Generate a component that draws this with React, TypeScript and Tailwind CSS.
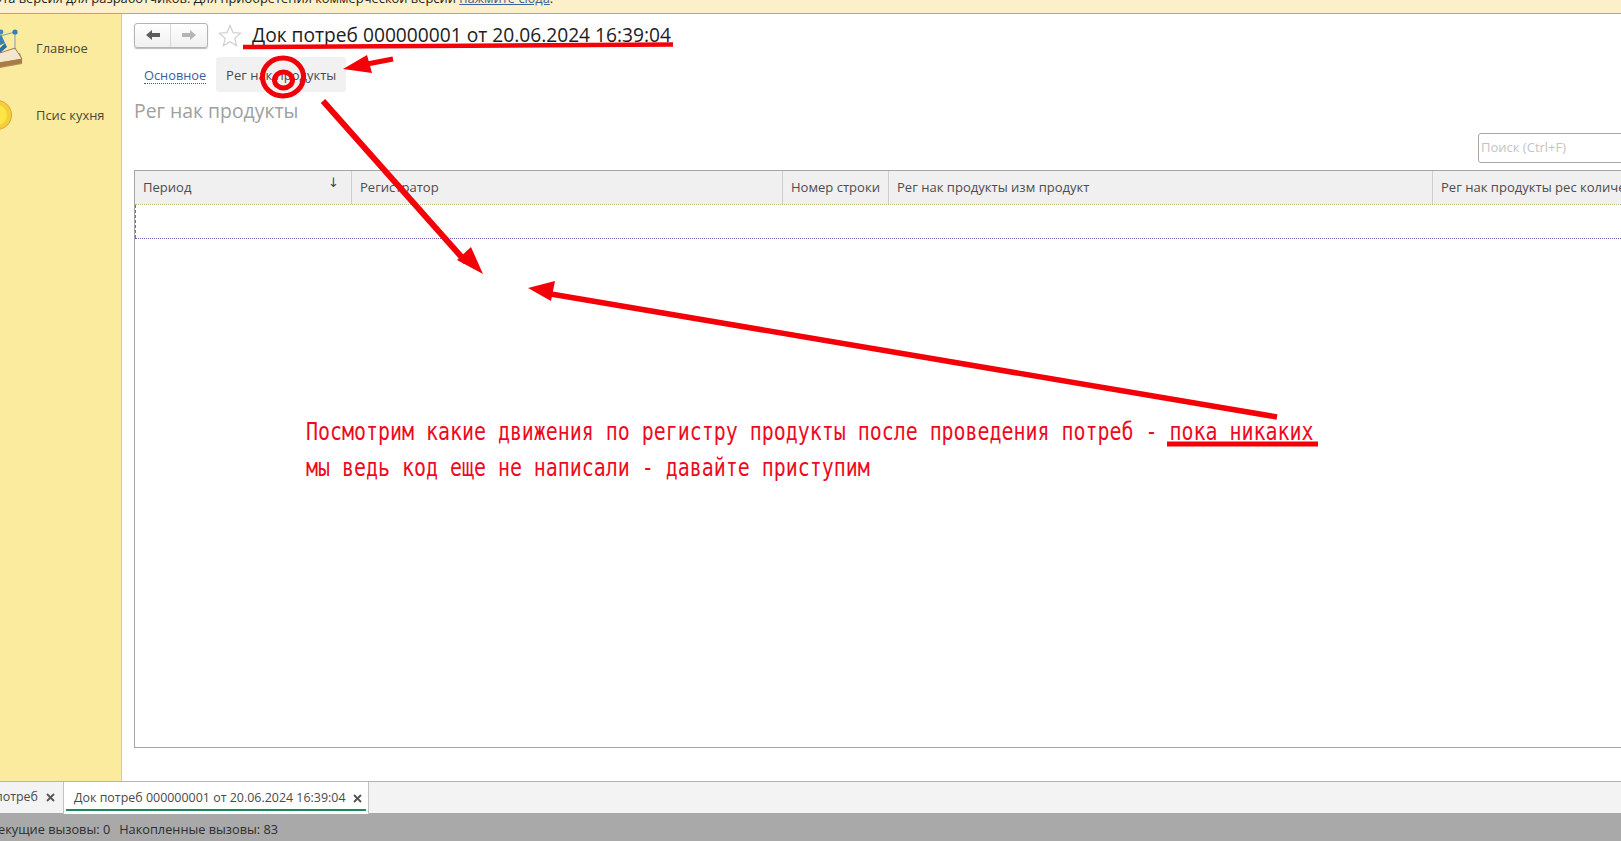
import React from "react";

const ui = "font-['Open_Sans',sans-serif]";

function HouseIcon() {
  return (
    <svg width="24" height="40" viewBox="0 0 24 40" className="shrink-0 mb-[1px]">
      <path d="M-6 31 L20 25 L22 31 L22 36 L-6 41 Z" fill="#b98e57" />
      <path d="M-6 27 L15 20 L22 31 L-6 36 Z" fill="#f3e7cd" stroke="#a57f4c" strokeWidth="1" />
      <path d="M-6 35 L22 31 L22 35 L-6 40 Z" fill="#a97b45" />
      <path d="M0 8 L15 4 L15 22" fill="none" stroke="#7f9db5" strokeWidth="1" />
      <path d="M-4 19 L1 6 L5 15 Z" fill="#3a80b8" />
      <path d="M-4 24 L5 15 L7 19 L0 25 Z" fill="#2a6fa8" />
      <circle cx="1" cy="4" r="2.4" fill="#3a8ac4" />
      <circle cx="15" cy="4" r="2.6" fill="#2f7fb8" />
    </svg>
  );
}

function CoinIcon() {
  return (
    <svg width="13" height="32" viewBox="0 0 13 32" className="shrink-0">
      <circle cx="-3" cy="16" r="15" fill="#d9ab2e" />
      <circle cx="-3" cy="16" r="14" fill="#f4cf3a" />
      <circle cx="-3" cy="16" r="10" fill="#fde545" />
    </svg>
  );
}

function Cross() {
  return (
    <svg width="9" height="9" viewBox="0 0 9 9" className="shrink-0">
      <path d="M1 1 L8 8 M8 1 L1 8" stroke="#555" strokeWidth="1.8" fill="none" />
    </svg>
  );
}

function NavItem({ icon, label, className }: { icon: React.ReactNode; label: string; className: string }) {
  return (
    <div className={`flex h-[40px] items-center ${className}`}>
      <div className="flex w-[36px] items-center">{icon}</div>
      <span className="pt-[2px] text-[12.9px] text-[#4a4a3a]">{label}</span>
    </div>
  );
}

function HeaderCell({ label, className, sort }: { label: string; className: string; sort?: boolean }) {
  return (
    <div className={`relative flex h-full shrink-0 items-center border-r border-[#cfcfcf] pl-[8px] text-[13.05px] whitespace-nowrap text-[#4d4d4d] ${className}`}>
      {label}
      {sort && <span className="absolute top-[2px] right-[12px] font-['DejaVu_Sans',sans-serif] text-[13px] text-[#444]">↓</span>}
    </div>
  );
}

function Annotations() {
  return (
    <svg className="pointer-events-none absolute top-0 left-0" width="1621" height="841" viewBox="0 0 1621 841">
      <path d="M243 47 L673 44.5" stroke="#f40008" strokeWidth="4.5" fill="none" />
      <path d="M393 59 L362 65" stroke="#f40008" strokeWidth="5" fill="none" />
      <path d="M343 69 L367 55 L372 73 Z" fill="#f40008" />
      <ellipse cx="283" cy="77" rx="20.5" ry="19" stroke="#f00008" strokeWidth="5" fill="none" />
      <ellipse cx="283.5" cy="80" rx="9" ry="8" stroke="#f00008" strokeWidth="5" fill="none" />
      <path d="M323 101 L466 262" stroke="#f40008" strokeWidth="6" fill="none" />
      <path d="M483 274 L471 247 L457 260 Z" fill="#f40008" />
      <path d="M1277 417 L545 293" stroke="#f40008" strokeWidth="5.5" fill="none" />
      <path d="M528 288 L555 281 L551 301 Z" fill="#f40008" />
      <path d="M1167 444 L1318 444" stroke="#f40008" strokeWidth="5" fill="none" />
    </svg>
  );
}

function Note() {
  const line = "absolute left-[305.5px] origin-left scale-x-[0.83] font-['DejaVu_Sans_Mono',monospace] text-[24px] leading-[30px] whitespace-pre text-[#ee0a1e]";
  return (
    <>
      <div className={`${line} top-[417px]`}>Посмотрим какие движения по регистру продукты после проведения потреб - пока никаких</div>
      <div className={`${line} top-[453px]`}>мы ведь код еще не написали - давайте приступим</div>
    </>
  );
}

export default function App() {
  return (
    <div className={`relative flex h-[841px] w-[1621px] flex-col overflow-hidden bg-white ${ui}`}>
      <div className="h-[14px] shrink-0 overflow-hidden border-b border-[#a8a8a0] bg-[#fbf0c9]">
        <div className="-mt-[11px] -ml-[6px] text-[12.9px] leading-[18px] whitespace-nowrap text-[#222]">
          Эта версия для разработчиков. Для приобретения коммерческой версии{" "}
          <span className="text-[#3a5f9c] underline">нажмите сюда</span>.
        </div>
      </div>

      <div className="flex min-h-0 flex-1">
        <aside className="w-[122px] shrink-0 border-r border-[#d9cf96] bg-[#fbeb9e] pt-[14px]">
          <NavItem icon={<HouseIcon />} label="Главное" className="" />
          <NavItem icon={<CoinIcon />} label="Псис кухня" className="mt-[27px]" />
        </aside>

        <main className="min-w-0 flex-1 pt-[8px] pl-[12px]">
          <div className="flex h-[26px] items-center">
            <div className="flex h-[25px] w-[74px] items-center rounded-[3px] border border-[#b3b3b3] bg-gradient-to-b from-white to-[#f0f0f0] shadow-[0_1px_1px_#bbb]">
              <div className="flex h-full w-[37px] items-center justify-center border-r border-[#d8d8d8]">
                <svg width="16" height="12" viewBox="0 0 16 12"><path d="M1 6 L7 1 V4 H15 V8 H7 V11 Z" fill="#5d5d5d" /></svg>
              </div>
              <div className="flex h-full w-[37px] items-center justify-center">
                <svg width="16" height="12" viewBox="0 0 16 12"><path d="M15 6 L9 1 V4 H1 V8 H9 V11 Z" fill="#b5b5b5" /></svg>
              </div>
            </div>
            <svg width="24" height="23" viewBox="0 0 24 23" className="ml-[10px]">
              <path d="M12 1.5 L15 8.6 L22.7 9.2 L16.8 14.3 L18.6 21.8 L12 17.8 L5.4 21.8 L7.2 14.3 L1.3 9.2 L9 8.6 Z" fill="#fff" stroke="#cfcfcf" strokeWidth="1.2" />
            </svg>
            <h1 className="ml-[10px] text-[19.2px] leading-[28px] font-normal whitespace-nowrap text-[#1d1d1d]">
              Док потреб 000000001 от 20.06.2024 16:39:04
            </h1>
          </div>

          <div className="mt-[9px] flex h-[35px] items-center">
            <span className="ml-[10px] border-b border-dotted border-[#3a5f9c] pt-[1px] text-[12.8px] leading-[16px] text-[#3a5f9c]">Основное</span>
            <span className="ml-[10px] flex h-[35px] w-[130px] items-center justify-center rounded-[3px] bg-[#f1f1f1] pt-[2px] text-[13px] text-[#4a4a4a]">Рег нак продукты</span>
          </div>

          <div className="mt-[2px] text-[19.4px] leading-[34px] text-[#a0a0a0]">Рег нак продукты</div>

          <div className="mt-[5px] flex h-[30px] justify-end">
            <div className="-mr-[20px] flex w-[163px] items-center rounded-[3px] border border-[#a8a8a8] pl-[2px] text-[13px] text-[#c4c4c4]">Поиск (Ctrl+F)</div>
          </div>

          <div className="mt-[7px] flex h-[578px] w-[1520px] flex-col border border-[#a5a5a5]">
            <div className="flex h-[33px] shrink-0 bg-[#f0f0f0]">
              <HeaderCell label="Период" className="w-[217px]" sort />
              <HeaderCell label="Регистратор" className="w-[431px]" />
              <HeaderCell label="Номер строки" className="w-[106px]" />
              <HeaderCell label="Рег нак продукты изм продукт" className="w-[544px]" />
              <HeaderCell label="Рег нак продукты рес количество" className="w-[300px] border-r-0" />
            </div>
            <div className="relative h-[35px] shrink-0 border-t border-b border-dotted border-t-[#b9b982] border-b-[#6a5fa8]">
              <div className="absolute top-0 left-0 h-full border-l border-dashed border-[#777]" />
            </div>
          </div>
        </main>
      </div>

      <div className="flex h-[32px] shrink-0 border-t border-[#b5b5b5] bg-[#f3f3f3] text-[12.45px] text-[#4a4a4a]">
        <div className="flex w-[63px] items-center justify-end overflow-hidden whitespace-nowrap">
          <span>потреб</span>
          <span className="ml-[8px]"><Cross /></span>
          <span className="w-[8px] shrink-0" />
        </div>
        <div className="relative -mb-px flex w-[306px] items-center border-x border-[#c2c2c2] bg-white pl-[10px] whitespace-nowrap">
          Док потреб 000000001 от 20.06.2024 16:39:04
          <span className="ml-[7px]"><Cross /></span>
          <div className="absolute right-[2px] bottom-[3px] left-[2px] h-[2px] bg-[#1b8a5a]" />
        </div>
      </div>

      <div className="flex h-[28px] shrink-0 items-center justify-start gap-[9px] overflow-hidden bg-[#a9a9a9] pt-[5px] text-[12.75px] whitespace-nowrap text-[#2e2e2e]">
        <span className="-ml-[9px]">Текущие вызовы: 0</span>
        <span>Накопленные вызовы: 83</span>
      </div>

      <Note />
      <Annotations />
    </div>
  );
}
